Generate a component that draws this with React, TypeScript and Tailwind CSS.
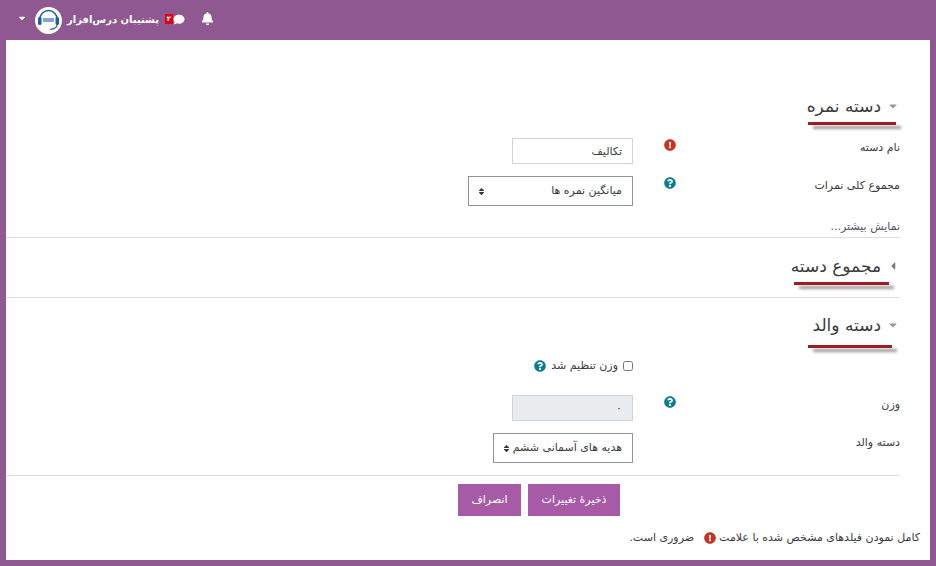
import { FaBell, FaCaretDown, FaCaretLeft, FaComment, FaExclamationCircle, FaQuestionCircle, FaSort } from 'react-icons/fa';
import type { ReactNode } from 'react';

function Heading({ title, open, lineClass }: { title: string; open: boolean; lineClass: string }) {
  return (
    <div className="flex flex-col items-start">
      <div className="flex h-[24px] items-center gap-[6px] pr-[1px]">
        {open ? <FaCaretDown className="w-[12px] h-[12px] text-[#999]" /> : <FaCaretLeft className="w-[12px] h-[12px] text-[#777]" />}
        <h3 className="text-[17px] leading-[24px] text-[#373a3c] font-normal">{title}</h3>
      </div>
      <div className={`h-[3px] bg-[#a01c25] shadow-[5px_4px_3px_#999] ${lineClass}`} />
    </div>
  );
}

function Row({ label, icon, children, className }: { label?: string; icon?: ReactNode; children: ReactNode; className: string }) {
  return (
    <div className={`grid grid-cols-[222px_16px_1fr] gap-x-0 ${className}`}>
      <div className="text-[11px] leading-[16px] text-[#373a3c] pt-[2px]">{label}</div>
      <div className="flex justify-center pt-[1px]">{icon}</div>
      <div className="mr-[29px] flex">{children}</div>
    </div>
  );
}

const Required = () => <FaExclamationCircle className="w-[12px] h-[12px] text-[#ca3120]" />;
const Help = () => <FaQuestionCircle className="w-[12px] h-[12px] text-[#0a7d93]" />;

function Select({ value, width }: { value: string; width: string }) {
  return (
    <div className={`flex h-[30px] items-center justify-between border border-[#8f959e] pr-[10px] pl-[8px] text-[11px] text-[#373a3c] ${width}`}>
      <span>{value}</span>
      <FaSort className="w-[9px] h-[9px] text-[#373a3c]" />
    </div>
  );
}

export default function App() {
  return (
    <div dir="rtl" className="flex h-[566px] w-[936px] flex-col bg-[#8f5890] font-['DejaVu_Sans','Noto_Sans',sans-serif]">
      <header dir="ltr" className="flex h-[40px] shrink-0 items-center pl-[17px] text-white">
        <FaCaretDown className="-mt-[5px] w-[10px] h-[10px]" />
        <div className="ml-[8px] flex h-[27px] w-[27px] items-center justify-center rounded-full bg-white">
          <svg viewBox="0 0 27 27" className="h-[27px] w-[27px]">
            <path d="M5 14V12a8.5 8.5 0 0 1 17 0v2" fill="none" stroke="#1f5fa8" strokeWidth="1.6" />
            <rect x="3" y="10" width="3.5" height="8" rx="1.5" fill="#1f5fa8" />
            <rect x="20.5" y="10" width="3.5" height="8" rx="1.5" fill="#1f5fa8" />
            <rect x="8" y="11" width="11" height="4" fill="#7fa6d4" />
            <path d="M22 18c0 3-3 4-7 4.5" fill="none" stroke="#1f5fa8" strokeWidth="1.2" />
          </svg>
        </div>
        <span dir="rtl" className="ml-[12px] w-[85px] whitespace-nowrap text-[10px] font-bold leading-none">پشتیبان درس‌افزار</span>
        <div className="relative -mt-[2px] ml-[6px] flex items-center">
          <span className="z-10 flex h-[10px] w-[8px] items-center justify-center bg-[#e3000f] text-[7px] font-bold leading-none">۲</span>
          <FaComment className="-ml-[1px] h-[11px] w-[14px]" />
        </div>
        <FaBell className="-mt-[3px] ml-[15px] h-[13px] w-[13px]" />
      </header>

      <main className="mx-[6px] flex h-[520px] flex-col bg-white">
        <div className="mr-[30px] flex flex-col pt-[54px]">
          <Heading title="دسته نمره" open lineClass="w-[88px] mr-[4px] mt-[4px]" />
          <Row label="نام دسته" icon={<Required />} className="mt-[13px]">
            <input readOnly value="تکالیف" className="h-[26px] w-[121px] border border-[#ced4da] px-[10px] text-[11px] text-[#373a3c] outline-none" />
          </Row>
          <Row label="مجموع کلی نمرات" icon={<Help />} className="mt-[12px]">
            <Select value="میانگین نمره ها" width="w-[165px]" />
          </Row>
          <a className="mt-[13px] text-[11px] leading-[16px] text-[#5a4a6a]">نمایش بیشتر...</a>
          <hr className="mt-[2px] border-t border-[#dedede]" />
          <div className="mt-[16px]">
            <Heading title="مجموع دسته" open={false} lineClass="w-[95px] mr-[11px] mt-[4px]" />
          </div>
          <hr className="mt-[12px] border-t border-[#dedede]" />
          <div className="mt-[15px]">
            <Heading title="دسته والد" open lineClass="w-[84px] mr-[8px] mt-[8px]" />
          </div>
          <Row className="mt-[10px]">
            <label className="flex h-[16px] items-center gap-[5px] text-[11px] text-[#373a3c]">
              <input type="checkbox" className="h-[10px] w-[10px]" />
              <span>وزن تنظیم شد</span>
              <Help />
            </label>
          </Row>
          <Row label="وزن" icon={<Help />} className="mt-[21px]">
            <input readOnly value="۰" className="h-[26px] w-[121px] border border-[#ced4da] bg-[#e9ecef] px-[10px] text-[11px] text-[#373a3c] outline-none" />
          </Row>
          <Row label="دسته والد" className="mt-[12px]">
            <Select value="هدیه های آسمانی ششم" width="w-[140px]" />
          </Row>
          <hr className="mt-[12px] border-t border-[#dedede]" />
          <div className="mr-[280px] mt-[8px] flex gap-[7px]">
            <button className="h-[32px] w-[92px] bg-[#a75aa5] text-[11px] text-white">ذخیرهٔ تغییرات</button>
            <button className="h-[32px] w-[63px] bg-[#a75aa5] text-[11px] text-white">انصراف</button>
          </div>
        </div>
        <p className="mr-[10px] mt-[14px] flex items-center text-[11px] leading-[16px] text-[#373a3c]">
          کامل نمودن فیلدهای مشخص شده با علامت
          <FaExclamationCircle className="mx-[3px] h-[12px] w-[12px] text-[#ca3120]" />
          <span className="mr-[7px]">ضروری است.</span>
        </p>
      </main>
    </div>
  );
}
